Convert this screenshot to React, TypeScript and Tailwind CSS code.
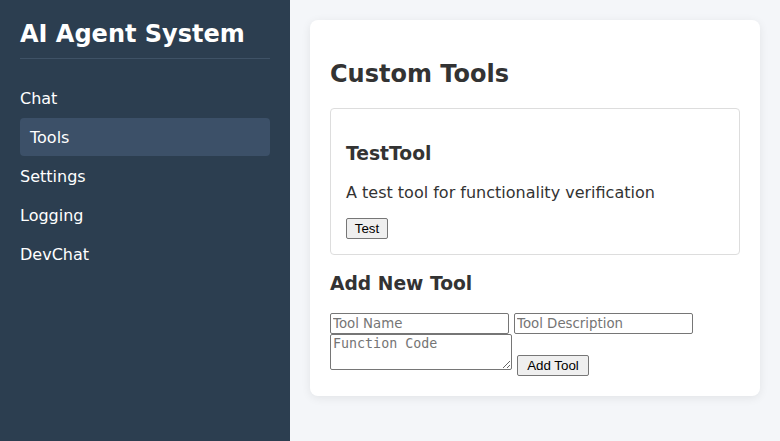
import React from "react";

export default function App() {
  const nav = ["Chat", "Tools", "Settings", "Logging", "DevChat"];
  return (
    <div
      className="flex w-[780px] h-[441px] bg-[#f4f6f9] text-[#333]"
      style={{ fontFamily: '"DejaVu Sans", sans-serif' }}
    >
      <aside className="w-[290px] h-full bg-[#2c3e50] text-white p-[20px] shrink-0">
        <h1 className="text-[24px] leading-[28px] font-bold pb-[10px] border-b border-[#3f5266]">
          AI Agent System
        </h1>
        <ul className="mt-[20px] flex flex-col gap-[1px]">
          {nav.map((n) => (
            <li
              key={n}
              className={
                n === "Tools"
                  ? "h-[38px] flex items-center pt-[1px] px-[10px] rounded-[4px] bg-[#3c5068] text-[16px]"
                  : "h-[38px] flex items-center pt-[1px] text-[16px]"
              }
            >
              {n}
            </li>
          ))}
        </ul>
      </aside>
      <main className="flex-1 p-[20px]">
        <div className="bg-white rounded-[8px] shadow-[0_2px_10px_rgba(0,0,0,0.08)] p-[20px]">
          <h2 className="text-[24px] leading-[28px] font-bold mt-[20px] mb-[20px]">Custom Tools</h2>
          <div className="border border-[#ddd] rounded-[4px] p-[15px]">
            <h3 className="text-[18.72px] leading-[22px] font-bold mt-[19px] mb-[18px]">TestTool</h3>
            <p className="text-[16px] leading-[19px] mb-[16px]">A test tool for functionality verification</p>
            <button
              className="block w-[42px] h-[21px] border border-[#767676] rounded-[2px] bg-[#efefef] text-[13.33px] text-black leading-none"
              style={{ fontFamily: '"Liberation Sans", Arial, sans-serif' }}
            >
              Test
            </button>
          </div>
          <h3 className="text-[18.72px] leading-[22px] font-bold mt-[18px] mb-[18px]">Add New Tool</h3>
          <div className="flex gap-[5px]">
            <input
              placeholder="Tool Name"
              className="w-[179px] h-[21px] border border-[#767676] rounded-[2px] px-[2px] text-[13.33px] placeholder:text-[#757575]"
            />
            <input
              placeholder="Tool Description"
              className="w-[179px] h-[21px] border border-[#767676] rounded-[2px] px-[2px] text-[13.33px] placeholder:text-[#757575]"
            />
          </div>
          <div className="flex gap-[5px] items-start">
            <textarea
              placeholder="Function Code"
              className="block w-[182px] h-[36px] border border-[#767676] rounded-[2px] px-[2px] py-[1px] text-[13.33px] leading-[16px] placeholder:text-[#757575]"
              style={{ fontFamily: '"DejaVu Sans Mono", monospace' }}
            />
            <button
              className="mt-[21px] w-[72px] h-[21px] border border-[#767676] rounded-[2px] bg-[#efefef] text-[13.33px] text-black leading-none"
              style={{ fontFamily: '"Liberation Sans", Arial, sans-serif' }}
            >
              Add Tool
            </button>
          </div>
        </div>
      </main>
    </div>
  );
}
